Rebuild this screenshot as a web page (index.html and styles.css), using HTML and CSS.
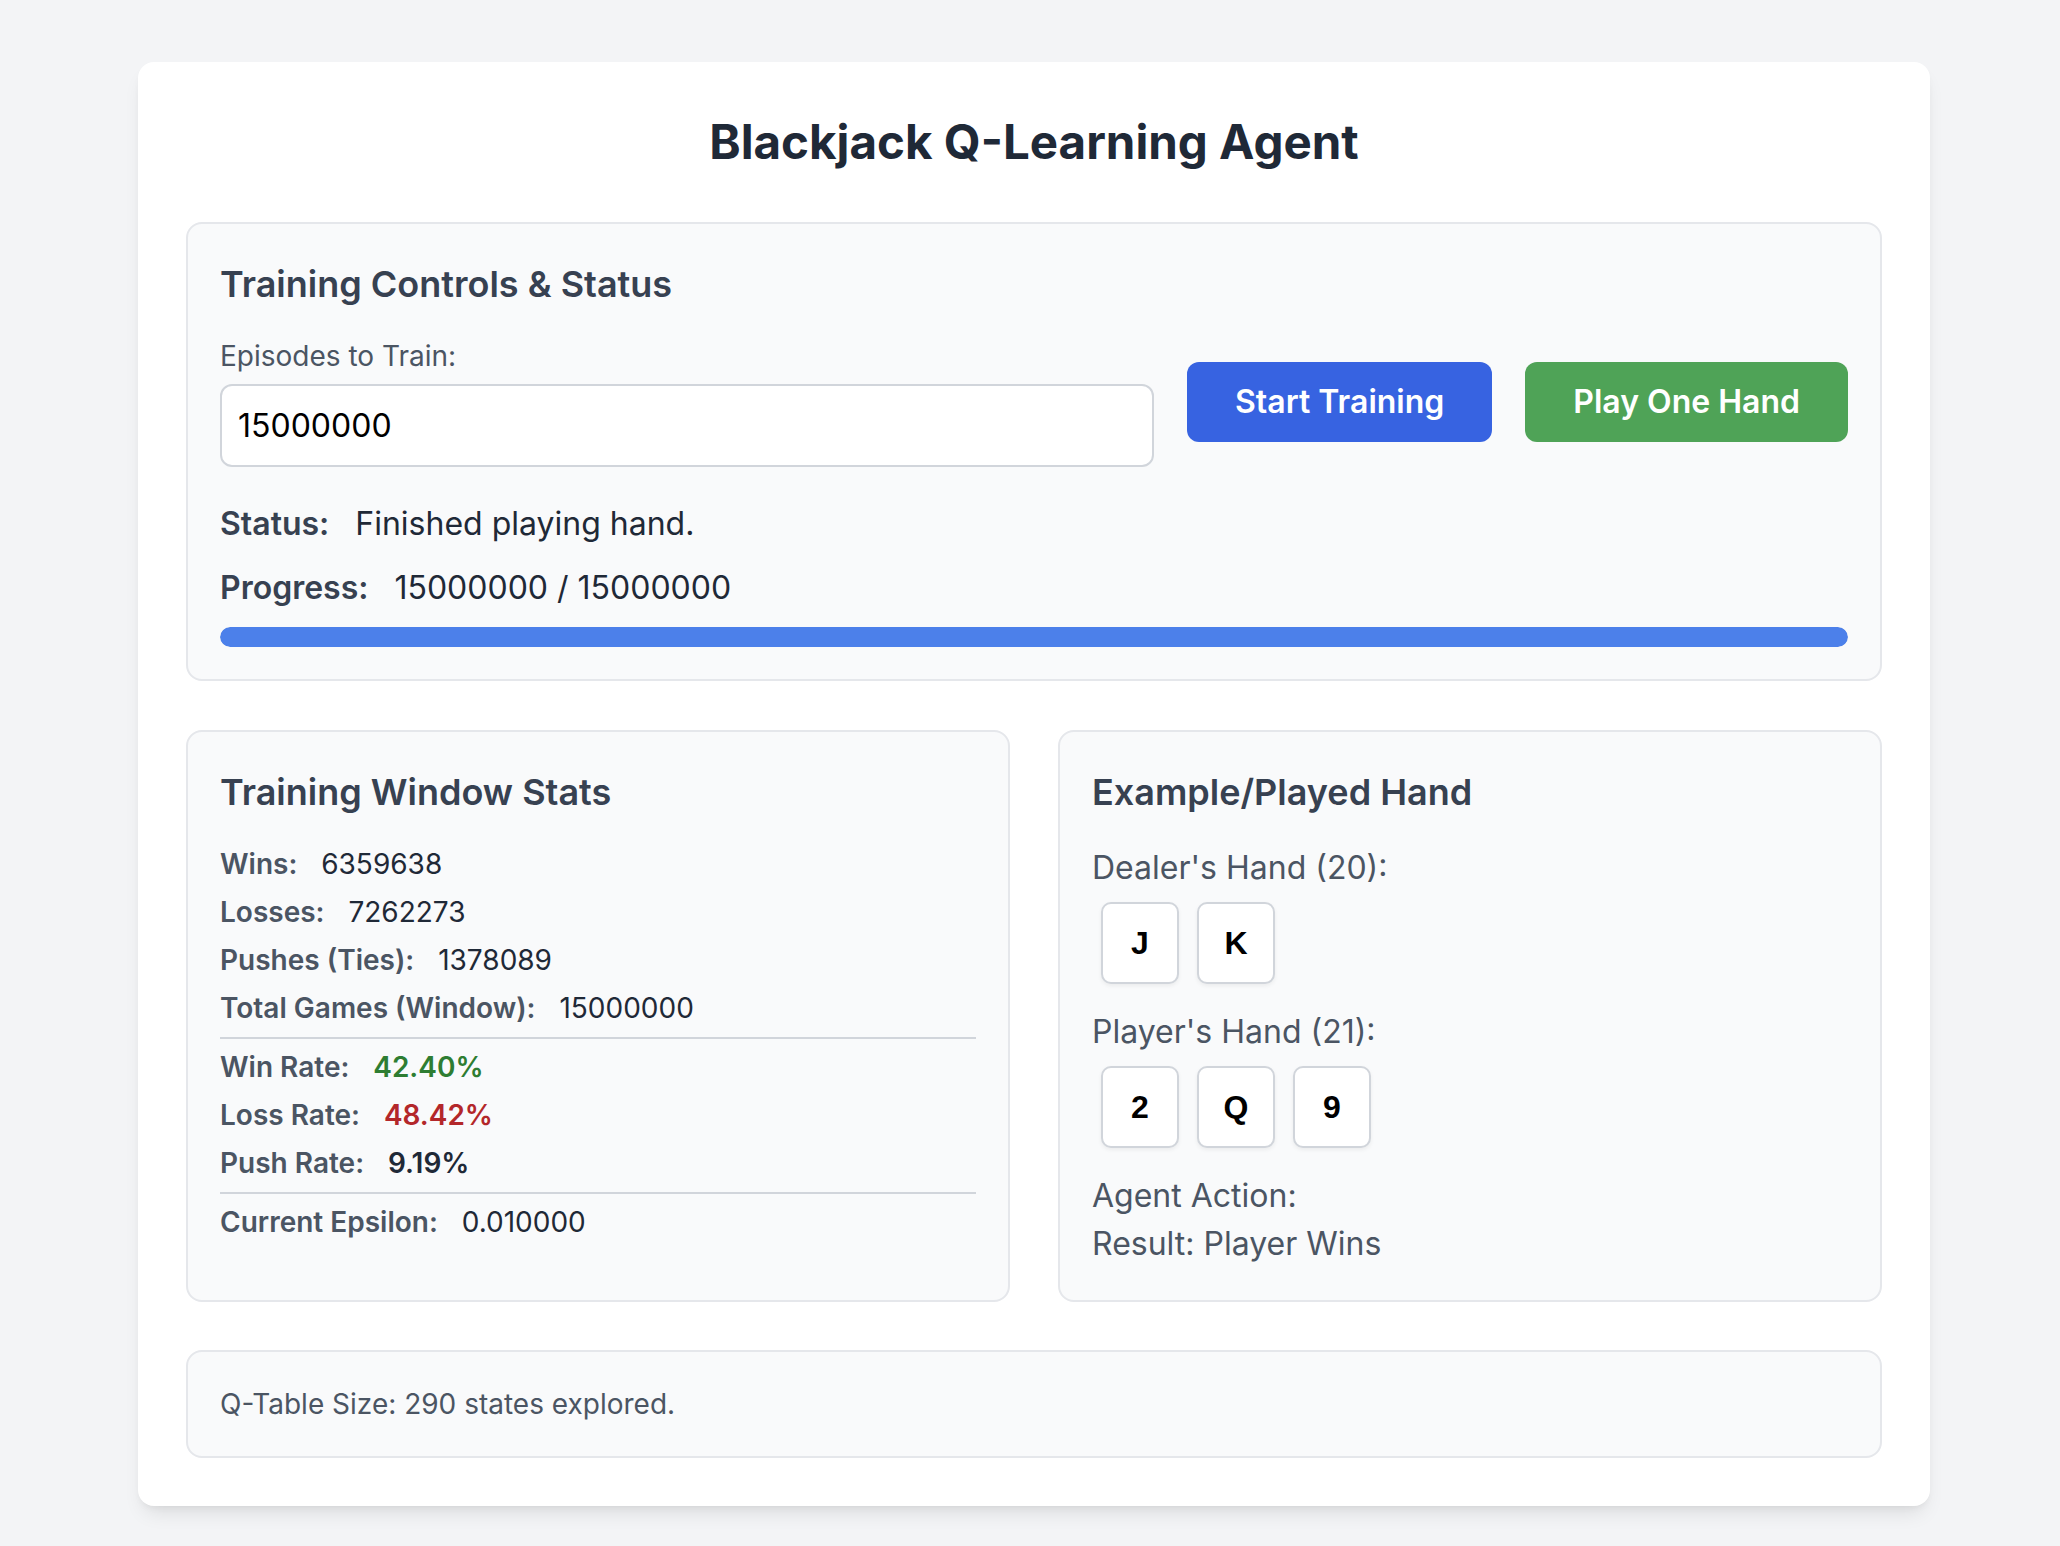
FILE: index.html
```html
<!DOCTYPE html>
<html lang="en">
<head>
<meta charset="utf-8">
<title>Blackjack Q-Learning Agent</title>
<link rel="stylesheet" href="styles.css">
</head>
<body>
<main class="card">
  <h1 class="title">Blackjack Q-Learning Agent</h1>

  <section class="panel">
    <h2 class="panel-title">Training Controls &amp; Status</h2>
    <div class="controls">
      <div class="field">
        <label class="field-label" for="episodes">Episodes to Train:</label>
        <input id="episodes" class="field-input" type="text" value="15000000">
      </div>
      <button class="btn btn-blue">Start Training</button>
      <button class="btn btn-green">Play One Hand</button>
    </div>
    <p class="status-line status-first"><span class="status-label">Status:</span> Finished playing hand.</p>
    <p class="status-line status-second"><span class="status-label">Progress:</span> 15000000 / 15000000</p>
    <div class="progress"><div class="progress-fill" style="width:100%"></div></div>
  </section>

  <div class="columns">
    <section class="panel">
      <h2 class="panel-title">Training Window Stats</h2>
      <div class="stats">
        <div class="stat"><span class="stat-label">Wins:</span> <span class="stat-value">6359638</span></div>
        <div class="stat"><span class="stat-label">Losses:</span> <span class="stat-value">7262273</span></div>
        <div class="stat"><span class="stat-label">Pushes (Ties):</span> <span class="stat-value">1378089</span></div>
        <div class="stat"><span class="stat-label">Total Games (Window):</span> <span class="stat-value">15000000</span></div>
        <hr class="divider">
        <div class="stat"><span class="stat-label">Win Rate:</span> <span class="stat-value rate win">42.40%</span></div>
        <div class="stat"><span class="stat-label">Loss Rate:</span> <span class="stat-value rate loss">48.42%</span></div>
        <div class="stat"><span class="stat-label">Push Rate:</span> <span class="stat-value rate">9.19%</span></div>
        <hr class="divider">
        <div class="stat"><span class="stat-label">Current Epsilon:</span> <span class="stat-value">0.010000</span></div>
      </div>
    </section>

    <section class="panel">
      <h2 class="panel-title">Example/Played Hand</h2>
      <p class="hand-label">Dealer's Hand (20):</p>
      <div class="hand">
        <div class="playing-card">J</div>
        <div class="playing-card">K</div>
      </div>
      <p class="hand-label">Player's Hand (21):</p>
      <div class="hand">
        <div class="playing-card">2</div>
        <div class="playing-card">Q</div>
        <div class="playing-card">9</div>
      </div>
      <p class="hand-label">Agent Action: </p>
      <p class="hand-label">Result: Player Wins</p>
    </section>
  </div>

  <section class="panel panel-footer">
    <p class="qtable">Q-Table Size: 290 states explored.</p>
  </section>
</main>
</body>
</html>
```

FILE: styles.css
```css
* {
  box-sizing: border-box;
}

html, body {
  margin: 0;
  padding: 0;
}

body {
  background: #f3f4f6;
  font-family: Inter, "Noto Sans", "Liberation Sans", sans-serif;
  color: #1f2937;
  padding: 62px 0 40px 8px;
}

.card {
  width: 1792px;
  margin: 0 auto;
  background: #ffffff;
  border-radius: 16px;
  padding: 48px;
  box-shadow: 0 12px 20px -6px rgba(0, 0, 0, 0.1), 0 4px 8px -4px rgba(0, 0, 0, 0.08);
}

.title {
  margin: 0 0 48px;
  font-size: 47.5px;
  line-height: 64px;
  font-weight: 700;
  text-align: center;
  color: #1f2937;
}

.panel {
  background: #f9fafb;
  border: 2px solid #e5e7eb;
  border-radius: 16px;
  padding: 32px;
}

.panel-title {
  margin: 0 0 24px;
  font-size: 36px;
  line-height: 56px;
  font-weight: 600;
  color: #374151;
}

.controls {
  display: flex;
  align-items: center;
  gap: 33px;
}

.field {
  flex: 1;
  display: flex;
  flex-direction: column;
}

.field-label {
  font-size: 28px;
  line-height: 40px;
  color: #4b5563;
  margin-bottom: 8px;
}

.field-input {
  height: 83px;
  border: 2px solid #d1d5db;
  border-radius: 12px;
  background: #ffffff;
  padding: 0 16px;
  font-family: Inter, "Noto Sans", sans-serif;
  font-size: 32px;
  color: #000000;
  outline: none;
}

.btn {
  border: none;
  border-radius: 12px;
  padding: 16px 48px;
  font-family: Inter, "Noto Sans", sans-serif;
  font-size: 32px;
  line-height: 48px;
  font-weight: 600;
  color: #ffffff;
  cursor: pointer;
}

.btn-blue {
  background: #3763e1;
}

.btn-green {
  background: #4fa357;
}

.status-line {
  margin: 0;
  font-size: 32px;
  line-height: 48px;
  color: #1f2937;
}

.status-first {
  margin-top: 33px;
}

.status-second {
  margin-top: 16px;
}

.status-label {
  font-weight: 600;
  color: #374151;
  margin-right: 17px;
}

.progress {
  margin-top: 15px;
  height: 20px;
  border-radius: 10px;
  background: #e5e7eb;
  overflow: hidden;
}

.progress-fill {
  height: 100%;
  background: #4c80ea;
  border-radius: 10px;
}

.columns {
  display: grid;
  grid-template-columns: 1fr 1fr;
  gap: 48px;
  margin: 49px 0 48px;
}

.stats {
  display: flex;
  flex-direction: column;
  gap: 8px;
}

.stat {
  font-size: 28px;
  line-height: 40px;
  color: #1f2937;
}

.stat-label {
  font-weight: 600;
  color: #4b5563;
  margin-right: 16px;
}

.stat-value.rate {
  font-weight: 600;
}

.stat-value.win {
  color: #2e7d32;
}

.stat-value.loss {
  color: #b3272a;
}

.divider {
  border: none;
  border-top: 2px solid #d1d5db;
  margin: 1px 0 0;
  height: 0;
}

.hand-label {
  margin: 0;
  font-size: 32px;
  line-height: 48px;
  color: #4b5563;
}

.hand {
  display: flex;
  margin: 10px 0 24px;
}

.playing-card {
  width: 78px;
  height: 82px;
  margin: 0 9px;
  display: flex;
  align-items: center;
  justify-content: center;
  background: #ffffff;
  border: 2px solid #d1d5db;
  border-radius: 10px;
  box-shadow: 0 2px 4px rgba(0, 0, 0, 0.06);
  font-family: "Liberation Sans", Arial, sans-serif;
  font-size: 32px;
  font-weight: 700;
  color: #000000;
}

.panel-footer {
  padding: 32px;
}

.qtable {
  margin: 0;
  font-size: 28px;
  line-height: 40px;
  color: #4b5563;
}
```
